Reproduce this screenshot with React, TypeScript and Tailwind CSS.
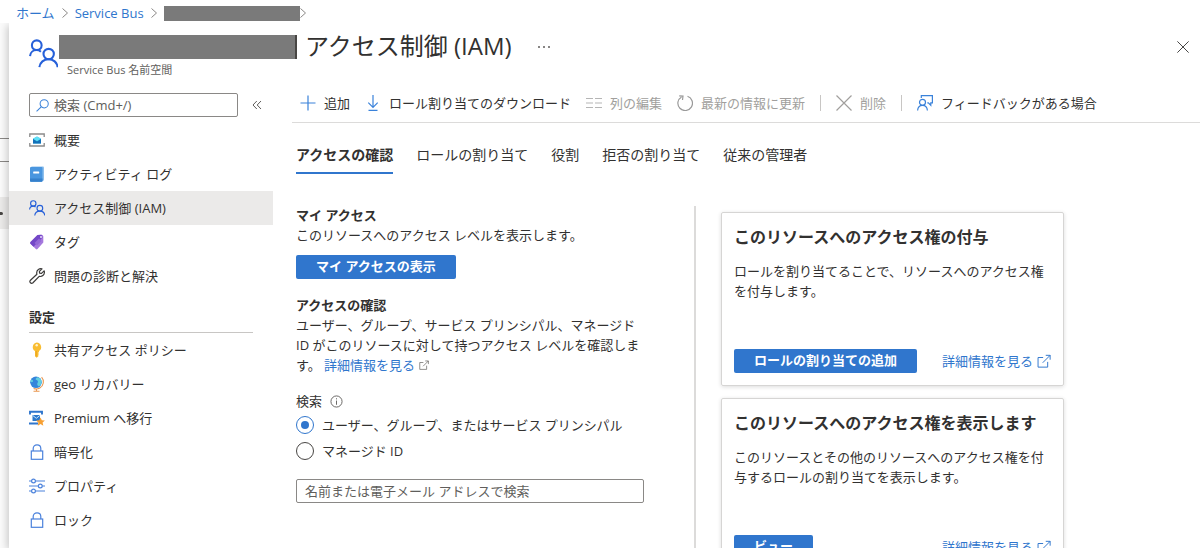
import React, { useState } from 'react';

type IconProps = { className?: string };

const PeopleIcon: React.FC<IconProps> = ({ className = 'size-4' }) => (
  <svg viewBox="0 0 28 28" className={className} fill="none" stroke="#2660d9" strokeWidth="2">
    <circle cx="7.5" cy="6" r="4.7" />
    <path d="M1 16.5c.3-3.4 3-5.8 6.3-5.8 1.8 0 3 .5 4.2 1.6" />
    <circle cx="19" cy="14.5" r="5" />
    <path d="M10 27.2c.6-4.6 4.3-7.7 8.9-7.7s8.2 3.1 8.7 7.7" />
  </svg>
);

const OverviewIcon = () => (
  <svg viewBox="0 0 16 16" className="size-4">
    <path d="M.8 5V2h14.4v3M.8 11v3h14.4v-3" fill="none" stroke="#8a8a8a" strokeWidth="1.3" />
    <path d="M4 6.8 8 4.400l4 2.400v4.800H4z" fill="#35b9ea" />
    <path d="M4 6.8 8 9.400l4-2.600v4.800H4z" fill="#1470b8" />
    <path d="M4 6.8 8 9l4-2.200-4-2.400z" fill="#5fe0f5" />
  </svg>
);

const LogIcon = () => (
  <svg viewBox="0 0 16 16" className="size-4">
    <rect x="2" y=".4" width="13" height="14.4" rx="1" fill="#8fc0ec" />
    <rect x="1" y="1" width="12.5" height="14.8" rx="1" fill="#4a96df" />
    <path d="M1 12.5h12.500v2.300a1 1 0 0 1-1 1H2a1 1 0 0 1-1-1z" fill="#3580cc" />
    <rect x="4.2" y="5.500" width="6" height="2" rx=".5" fill="#fff" />
  </svg>
);

const TagIcon = () => (
  <svg viewBox="0 0 16 16" className="size-4">
    <path d="M8.500 1 12.500.8q1.700.2 1.800 1.700V8.500L8.500 15q-.8.800-1.700 0L1.500 9.800q-.8-.9 0-1.800z" fill="#a679dd" />
    <path d="M8.500 1 1.500 8q-.8.900 0 1.800l3 3L13.500 3.500 12.500.8z" fill="#7347c7" />
    <path d="m5.500 9 4.500-4.500 2.500 2.500L8 11.500z" fill="#9468d6" />
    <circle cx="12" cy="3.100" r="1" fill="#e9dcfa" />
  </svg>
);

const WrenchIcon = () => (
  <svg viewBox="0 0 16 16" className="size-4" fill="none" stroke="#3b3a39" strokeWidth="1.2" strokeLinejoin="round">
    <path d="M13 .9c-2.500-.8-5.400 1-5.300 3.900 0 .6.100 1 .2 1.500L1.200 12.500a1.800 1.800 0 0 0 2.500 2.500l6.500-6.700c2.800.8 5.300-1.400 5.200-4.100 0-.5-.1-1-.3-1.400L12.500 5.400l-1.900-.2-.2-1.800z" />
  </svg>
);

const KeyIcon = () => (
  <svg viewBox="0 0 16 16" className="size-4">
    <path d="M7.700.5A4.600 4.600 0 0 1 10 9v1l-1 1 1 1-1 1 .6 1-1.900 1.800L6 14.200V9A4.600 4.600 0 0 1 7.700.5z" fill="#f9bd31" />
    <circle cx="7.700" cy="3.200" r="1.200" fill="#fff3cf" />
    <path d="M7.200 9v5.500" stroke="#e39a1a" strokeWidth=".8" />
  </svg>
);

const GlobeIcon = () => (
  <svg viewBox="0 0 16 16" className="size-4">
    <circle cx="7" cy="6.300" r="5.800" fill="#3585da" />
    <path d="M8.500 1.200C6.500 2 6 3.500 7.500 4s2 1.500 1 3 .5 3 1.500 3.500C12 9 13 7 12.600 5c-.5-2-2-3.300-4.100-3.800zM2.500 3.500C3.500 4 4.500 4.500 4 5.500S2 6.500 1.400 5.500c.1-.8.500-1.400 1.100-2z" fill="#62cfe0" />
    <path d="M12.600 1.200c3 3.300 2.100 8.500-1.800 10.800-2 1.200-4.300 1.200-6.200.5M7.500 12.800v2.200M4.500 15.300h6" fill="none" stroke="#e9974f" strokeWidth="1.100" />
  </svg>
);

const PremiumIcon = () => (
  <svg viewBox="0 0 16 16" className="size-4">
    <path d="M1 4.500V1.700h12v2.800M0 13.500h9" fill="none" stroke="#2f76cd" strokeWidth="1.900" />
    <rect x="3.500" y="5" width="7.500" height="6" rx=".5" fill="#2b78cc" />
    <path d="m3.800 5.500 3.500 2.800 3.500-2.800" fill="none" stroke="#c8e3fb" strokeWidth="1" />
    <path d="m11.500 7.500 1.300 2.800 3.100.3-2.300 2 .7 3.100-2.800-1.600-2.700 1.600.6-3.100-2.300-2 3.100-.3z" fill="#f7a033" />
  </svg>
);

const LockIcon = () => (
  <svg viewBox="0 0 16 16" className="size-4" fill="none" stroke="#4b82dc" strokeWidth="1.200">
    <rect x="2.300" y="7" width="11.400" height="8.300" />
    <path d="M4.200 7V4.600C4.200 2.300 5.700.8 8 .8s3.800 1.500 3.800 3.800V7" />
  </svg>
);

const SlidersIcon = () => (
  <svg viewBox="0 0 16 16" className="size-4" fill="none" stroke="#4b82dc" strokeWidth="1.200">
    <path d="M0 3h2.500M6.500 3H16M0 8h9.300M13.300 8H16M0 13h2.500M6.500 13H16" />
    <circle cx="4.500" cy="3" r="1.900" />
    <circle cx="11.300" cy="8" r="1.900" />
    <circle cx="4.500" cy="13" r="1.900" />
  </svg>
);

const CrossIcon: React.FC<IconProps> = ({ className = 'size-4' }) => (
  <svg viewBox="0 0 16 16" className={className} fill="none" stroke="currentColor" strokeWidth="1.200">
    <path d="m.5.5 15 15M15.500.5l-15 15" />
  </svg>
);

const ExternalIcon: React.FC<IconProps> = ({ className = 'size-4' }) => (
  <svg viewBox="0 0 16 16" className={className} fill="none" stroke="currentColor" strokeWidth="1.100">
    <path d="M7 4H1.200v11h11V9M10 1.500h5v5M15 1.500 6.500 10" />
  </svg>
);

const ChevronIcon = () => (
  <svg viewBox="0 0 6 10" className="h-[10px] w-[6px] shrink-0" fill="none" stroke="#8a8886" strokeWidth="1">
    <path d="m.5.5 5 4.500-5 4.500" />
  </svg>
);

const PlusIcon = () => (
  <svg viewBox="0 0 16 16" className="size-4" fill="none" stroke="#3a82da" strokeWidth="1.200">
    <path d="M8 .5v15M.5 8h15" />
  </svg>
);

const DownloadIcon = () => (
  <svg viewBox="0 0 16 16" className="size-4" fill="none" stroke="#3a82da" strokeWidth="1.200">
    <path d="M8 0v12.200M3.300 7.600 8 12.300l4.700-4.700M3.500 15.400h9" />
  </svg>
);

const ColumnsIcon = () => (
  <svg viewBox="0 0 16 16" className="size-4" fill="none" stroke="#b5b5b5" strokeWidth="1.200">
    <path d="M0 3.500h7M9 3.500h7M0 8h7M9 8h7M0 12.500h7M9 12.500h7" />
  </svg>
);

const RefreshIcon = () => (
  <svg viewBox="0 0 16 16" className="size-4" fill="none" stroke="#9a9a9a" strokeWidth="1.200">
    <path d="M10.500 1.300a7.300 7.300 0 1 1-6 .6M2.200.9l3.800.2-.5 3.900" />
  </svg>
);

const FeedbackIcon = () => (
  <svg viewBox="0 0 16 16" className="size-4" fill="none" stroke="#3a82da" strokeWidth="1.200">
    <path d="M4.300 3V.7h11.100v7.200h-1.600v2.400l-2.500-2.400h-1" />
    <circle cx="5.500" cy="7.300" r="3" />
    <path d="M.6 15.500c.2-3 2.200-5.200 4.900-5.200s4.700 2.200 4.900 5.200" />
  </svg>
);

const SearchIcon = () => (
  <svg viewBox="0 0 14 14" className="size-[13px] shrink-0" fill="none" stroke="#3a82da" strokeWidth="1.100">
    <circle cx="8.800" cy="5.200" r="4.400" />
    <path d="M5.600 8.400.6 13.400" />
  </svg>
);

const InfoIcon = () => (
  <svg viewBox="0 0 14 14" className="size-[13px]" fill="none" stroke="#605e5c" strokeWidth="1">
    <circle cx="7" cy="7" r="6" />
    <path d="M7 6v4.500M7 3.500v1.200" />
  </svg>
);

const generalItems = [
  { label: '概要', icon: <OverviewIcon /> },
  { label: 'アクティビティ ログ', icon: <LogIcon /> },
  { label: 'アクセス制御 (IAM)', icon: <PeopleIcon /> },
  { label: 'タグ', icon: <TagIcon /> },
  { label: '問題の診断と解決', icon: <WrenchIcon /> },
];

const settingItems = [
  { label: '共有アクセス ポリシー', icon: <KeyIcon /> },
  { label: 'geo リカバリー', icon: <GlobeIcon /> },
  { label: 'Premium へ移行', icon: <PremiumIcon /> },
  { label: '暗号化', icon: <LockIcon /> },
  { label: 'プロパティ', icon: <SlidersIcon /> },
  { label: 'ロック', icon: <LockIcon /> },
];

const tabs = ['アクセスの確認', 'ロールの割り当て', '役割', '拒否の割り当て', '従来の管理者'];

const cards = [
  {
    title: 'このリソースへのアクセス権の付与',
    body: 'ロールを割り当てることで、リソースへのアクセス権を付与します。',
    action: 'ロールの割り当ての追加',
  },
  {
    title: 'このリソースへのアクセス権を表示します',
    body: 'このリソースとその他のリソースへのアクセス権を付与するロールの割り当てを表示します。',
    action: 'ビュー',
  },
];

type NavItemProps = { label: string; icon: React.ReactNode; active?: boolean; onClick?: () => void };

const NavItem: React.FC<NavItemProps> = ({ label, icon, active, onClick }) => (
  <li>
    <a
      href="#"
      onClick={onClick}
      className={`flex h-[34px] items-center gap-[9px] pl-5 ${active ? 'bg-[#ebeae9]' : 'hover:bg-[#f3f2f1]'}`}
    >
      {icon}
      <span>{label}</span>
    </a>
  </li>
);

type ToolButtonProps = { label: string; icon: React.ReactNode; disabled?: boolean };

const ToolButton: React.FC<ToolButtonProps> = ({ label, icon, disabled }) => (
  <button
    disabled={disabled}
    className={`flex items-center gap-2 whitespace-nowrap ${disabled ? 'text-[#a19f9d]' : 'text-[#323130]'}`}
  >
    {icon}
    {label}
  </button>
);

const PrimaryButton: React.FC<{ children: React.ReactNode }> = ({ children }) => (
  <button className="flex h-6 items-center rounded-[2px] bg-[#3076cd] px-5 pb-[3px] font-bold text-white">
    {children}
  </button>
);

const App: React.FC = () => {
  const [page, setPage] = useState('アクセス制御 (IAM)');
  const [tab, setTab] = useState(tabs[0]);
  const [assignee, setAssignee] = useState('user');

  const radioClass =
    'grid size-[18px] appearance-none place-items-center rounded-full border border-[#484644] checked:border-[#3076cd] before:size-2 before:rounded-full checked:before:bg-[#3076cd]';

  return (
    <div className="flex h-screen flex-col overflow-hidden bg-white font-['Open_Sans','Noto_Sans_CJK_JP',sans-serif] text-[13px] leading-5 text-[#323130]">
      <nav className="flex h-[23px] shrink-0 items-center gap-[7px] pt-[3px] pl-4 text-[#2f76cd]">
        <a href="#">ホーム</a>
        <ChevronIcon />
        <a href="#">Service Bus</a>
        <ChevronIcon />
        <span className="flex items-center">
          <span className="h-[15px] w-[136px] bg-[#7a7a7a]" />
          <ChevronIcon />
        </span>
      </nav>

      <div className="flex min-h-0 flex-1">
        {/* Edge of the blade underneath */}
        <div className="w-[9px] shrink-0 bg-[#fbfbfb] pt-[115px]">
          <div className="h-6 border-y border-[#8a8886]" />
          <div className="mt-[35px] flex h-8 items-center bg-[#ebeae9]">
            <span className="h-[3px] w-[3px] rounded-r-full bg-[#484644]" />
          </div>
        </div>

        <section className="flex min-w-0 flex-1 flex-col bg-white shadow-[-2px_2px_8px_rgba(0,0,0,0.2)] [clip-path:inset(0_0_0_-9px)]">
          <header className="flex h-[70px] shrink-0 items-start pt-2 pr-[10px] pl-5">
            <PeopleIcon className="mt-2 size-[29px] shrink-0" />
            <div className="ml-px">
              <div className="flex h-8 items-center">
                <span className="h-6 w-[238px] border-r-2 border-[#484644] bg-[#7a7a7a]" />
                <h1 className="ml-2 pb-[2px] text-[24px] leading-8 whitespace-nowrap">アクセス制御 (IAM)</h1>
                <button aria-label="その他" className="ml-6 flex gap-[3px] p-[2px]">
                  <span className="size-[2px] rounded-full bg-[#605e5c]" />
                  <span className="size-[2px] rounded-full bg-[#605e5c]" />
                  <span className="size-[2px] rounded-full bg-[#605e5c]" />
                </button>
              </div>
              <p className="pl-2 text-[11px] leading-[14px] text-[#605e5c]">Service Bus 名前空間</p>
            </div>
            <button aria-label="閉じる" className="mt-[9px] ml-auto p-[1px]">
              <CrossIcon className="size-3" />
            </button>
          </header>

          <div className="flex min-h-0 flex-1">
            <aside className="w-[264px] shrink-0">
              <div className="flex items-center gap-[14px] pl-5">
                <label className="flex h-6 w-[209px] items-center gap-[5px] rounded-[2px] border border-[#8a8886] px-[6px]">
                  <SearchIcon />
                  <input
                    type="search"
                    aria-label="検索"
                    placeholder="検索 (Cmd+/)"
                    className="w-full min-w-0 bg-transparent outline-none placeholder:text-[#605e5c]"
                  />
                </label>
                <button aria-label="折りたたむ">
                  <svg viewBox="0 0 10 10" className="size-[10px]" fill="none" stroke="#605e5c" strokeWidth="1">
                    <path d="M4.800 1 1 5l3.800 4M9 1 5.200 5 9 9" />
                  </svg>
                </button>
              </div>

              <ul className="mt-[6px]">
                {generalItems.map(item => (
                  <NavItem key={item.label} {...item} active={page === item.label} onClick={() => setPage(item.label)} />
                ))}
              </ul>
              <h2 className="mt-[14px] mr-5 ml-5 h-[26px] border-b border-[#c8c6c4] font-bold">設定</h2>
              <ul>
                {settingItems.map(item => (
                  <NavItem key={item.label} {...item} active={page === item.label} onClick={() => setPage(item.label)} />
                ))}
              </ul>
            </aside>

            <main className="ml-[19px] flex min-w-0 flex-1 flex-col">
              <div className="flex h-[30px] shrink-0 items-start gap-[15px] border-b border-[#dcdbda] pl-2">
                <ToolButton label="追加" icon={<PlusIcon />} />
                <ToolButton label="ロール割り当てのダウンロード" icon={<DownloadIcon />} />
                <ToolButton label="列の編集" icon={<ColumnsIcon />} disabled />
                <ToolButton label="最新の情報に更新" icon={<RefreshIcon />} disabled />
                <span className="mt-[2px] h-4 w-px bg-[#c8c6c4]" />
                <ToolButton label="削除" icon={<CrossIcon />} disabled />
                <span className="mt-[2px] h-4 w-px bg-[#c8c6c4]" />
                <ToolButton label="フィードバックがある場合" icon={<FeedbackIcon />} />
              </div>

              <div role="tablist" className="mt-5 flex shrink-0 gap-[23px] pl-1 text-sm">
                {tabs.map(name => (
                  <button
                    key={name}
                    role="tab"
                    aria-selected={tab === name}
                    onClick={() => setTab(name)}
                    className={`border-b-2 pt-[2px] pb-[7px] ${tab === name ? 'border-[#3076cd] font-bold' : 'border-transparent'}`}
                  >
                    {name}
                  </button>
                ))}
              </div>

              <div className="mt-8 flex min-h-0 flex-1 pl-1">
                <div className="w-[400px] shrink-0 border-r-2 border-[#dcdbda] pr-[50px]">
                  <h3 className="-mt-px font-bold">マイ アクセス</h3>
                  <p>このリソースへのアクセス レベルを表示します。</p>
                  <div className="mt-[10px]">
                    <PrimaryButton>マイ アクセスの表示</PrimaryButton>
                  </div>

                  <h3 className="mt-4 font-bold">アクセスの確認</h3>
                  <p>
                    ユーザー、グループ、サービス プリンシパル、マネージド ID がこのリソースに対して持つアクセス レベルを確認します。{' '}
                    <a href="#" className="text-[#2f76cd]">
                      詳細情報を見る
                      <ExternalIcon className="ml-1 inline size-[10px] align-baseline text-[#605e5c]" />
                    </a>
                  </p>

                  <fieldset className="mt-4">
                    <legend className="flex items-center gap-2">
                      検索
                      <InfoIcon />
                    </legend>
                    <label className="mt-1 flex items-center gap-2">
                      <input
                        type="radio"
                        name="assignee"
                        checked={assignee === 'user'}
                        onChange={() => setAssignee('user')}
                        className={radioClass}
                      />
                      ユーザー、グループ、またはサービス プリンシパル
                    </label>
                    <label className="mt-[6px] flex items-center gap-2">
                      <input
                        type="radio"
                        name="assignee"
                        checked={assignee === 'managed'}
                        onChange={() => setAssignee('managed')}
                        className={radioClass}
                      />
                      マネージド ID
                    </label>
                  </fieldset>
                  <input
                    type="text"
                    aria-label="名前または電子メール アドレスで検索"
                    placeholder="名前または電子メール アドレスで検索"
                    className="mt-[18px] h-6 w-full rounded-[2px] border border-[#8a8886] px-2 outline-none placeholder:text-[#605e5c]"
                  />
                </div>

                <div className="ml-[25px] flex w-[343px] flex-col gap-3 pt-[6px]">
                  {cards.map(card => (
                    <article
                      key={card.title}
                      className="shrink-0 rounded-[2px] border border-[#d6d5d4] p-3 shadow-[0_1px_4px_rgba(0,0,0,0.14)]"
                    >
                      <h3 className="text-base leading-6 font-bold">{card.title}</h3>
                      <p className="mt-3 h-10">{card.body}</p>
                      <div className="mt-12 flex items-center justify-between">
                        <PrimaryButton>{card.action}</PrimaryButton>
                        <a href="#" className="flex items-center gap-1 text-[#2f76cd]">
                          詳細情報を見る
                          <ExternalIcon className="size-[14px]" />
                        </a>
                      </div>
                    </article>
                  ))}
                </div>
              </div>
            </main>
          </div>
        </section>
      </div>
    </div>
  );
};

export default App;
